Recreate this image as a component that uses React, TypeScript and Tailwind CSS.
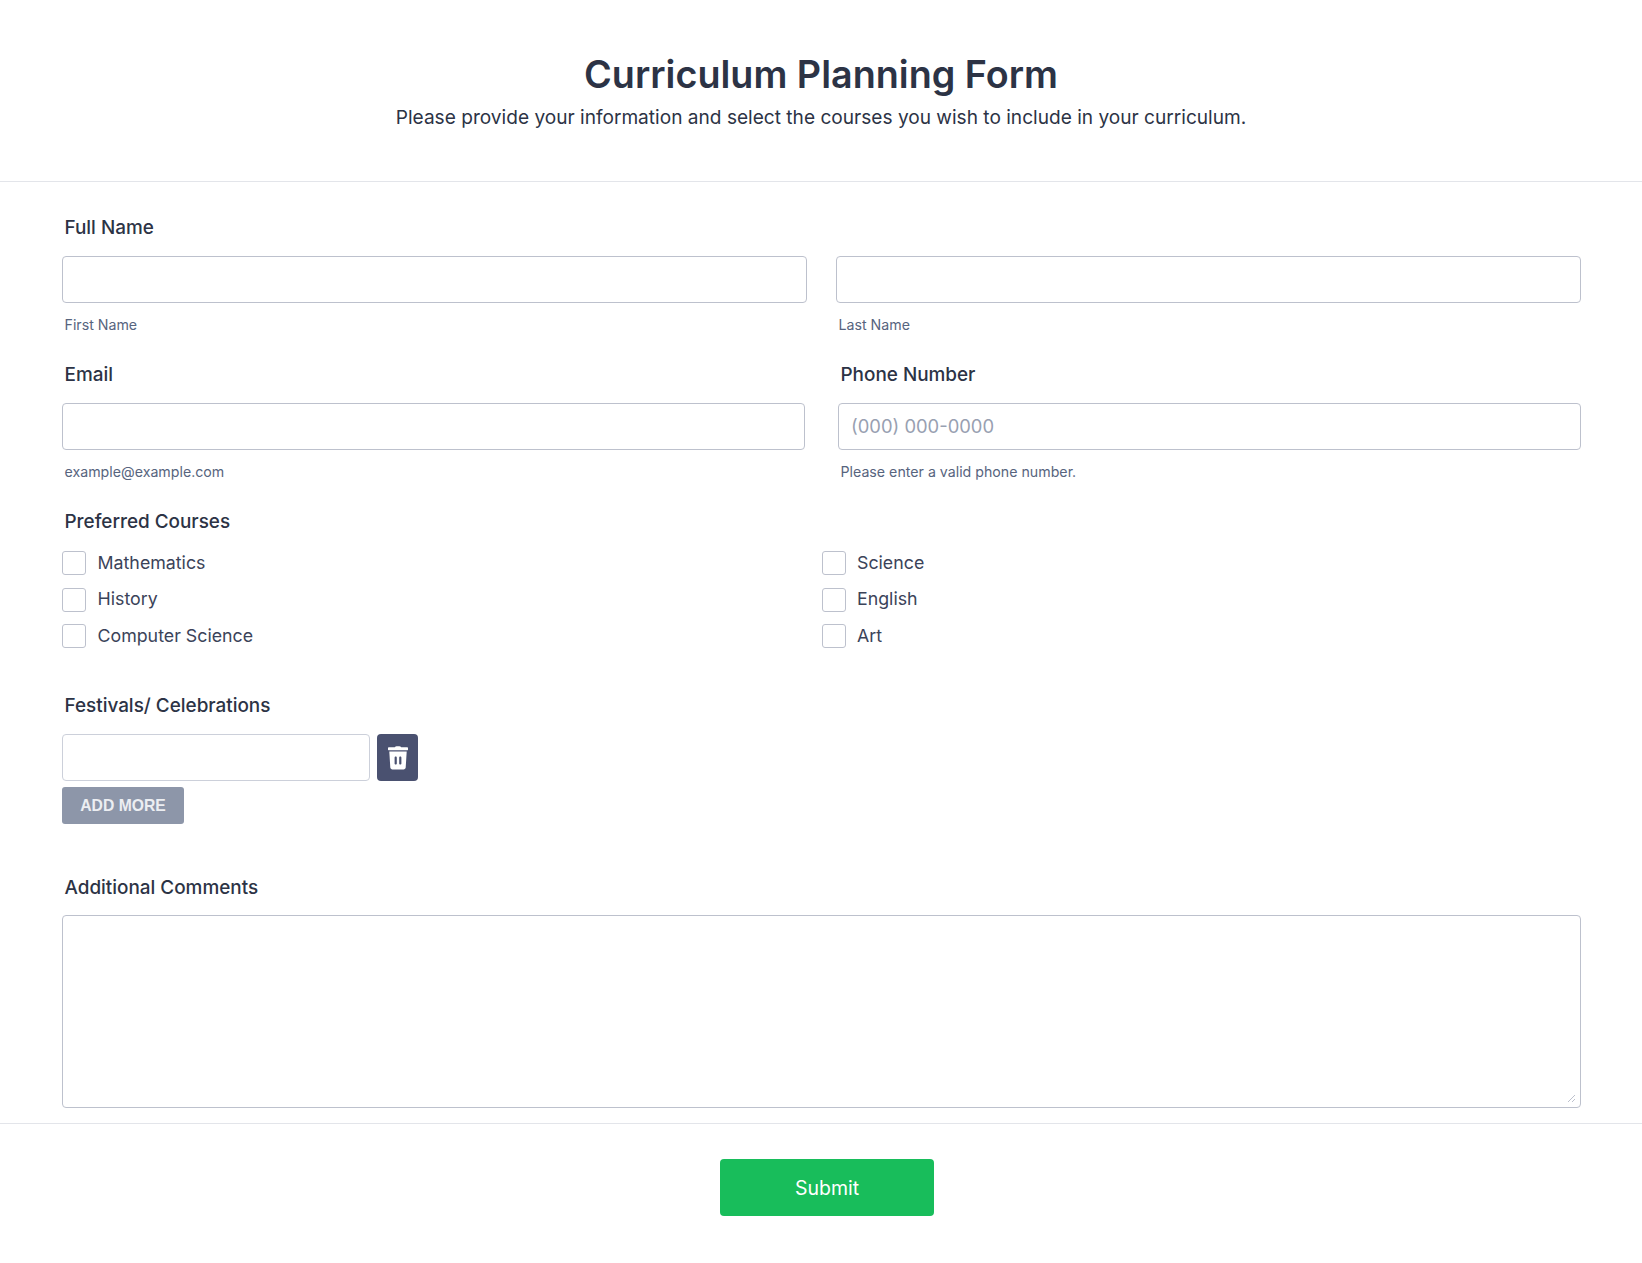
const font = { fontFamily: 'Inter, "Noto Sans", sans-serif' }

const inputClass =
  'block h-[47px] rounded-[4px] border border-[#bdc1cd] bg-white px-[12px] pb-[2px] text-[18.4px] text-[#2c3345] outline-none placeholder:text-[#98a0b1]'

// ── Sub-components ────────────────────────────────────────────────────────────

function Label({ children }: { children: string }) {
  return <p className="pl-[2.5px] text-[18.9px] font-[450] leading-[24px] text-[#2c3345]">{children}</p>
}

function Sub({ children }: { children: string }) {
  return <p className="mt-[13px] pl-[2.5px] text-[14.2px] leading-[18px] text-[#57647e]">{children}</p>
}

function Check({ label }: { label: string }) {
  return (
    <label className="flex h-[24px] items-center gap-[11.5px] text-[17.8px] text-[#3b4359]">
      <input type="checkbox" className="h-[24px] w-[24px] appearance-none rounded-[3px] border border-[#bdc1cd] bg-white" />
      <span>{label}</span>
    </label>
  )
}

function TrashIcon() {
  return (
    <svg width="20" height="24" viewBox="0 0 20 24" fill="white">
      <path d="M6.800 1.300 7.200.8C7.500.4 8 .2 8.500.2h3c.5 0 1 .2 1.300.6l.4.5H19c.6 0 1 .4 1 1v1.400c0 .3-.2.5-.5.5H.5C.2 4.200 0 4 0 3.700V2.300c0-.6.4-1 1-1h5.800Z" />
      <path
        fillRule="evenodd"
        d="M1.300 5.600h17.400l-1 16c-.1 1.100-1 1.900-2.100 1.900H4.400c-1.100 0-2-.8-2.100-1.900l-1-16ZM7.700 10.600c-.6 0-1.100.5-1.100 1.100v5.800c0 .6.5 1.100 1.100 1.100s1.100-.5 1.100-1.100v-5.800c0-.6-.5-1.100-1.100-1.100Zm4.600 0c-.6 0-1.100.5-1.100 1.100v5.800c0 .6.5 1.100 1.100 1.100s1.100-.5 1.100-1.100v-5.800c0-.6-.5-1.100-1.100-1.100Z"
      />
    </svg>
  )
}

// ── Page ──────────────────────────────────────────────────────────────────────

export default function App() {
  return (
    <div style={font} className="min-h-[1263px] bg-white">
      <header className="h-[182px] border-b border-[#e3e5ea] pt-[48px] text-center">
        <h1 className="text-[37.7px] font-semibold leading-[52px] text-[#2c3345]">Curriculum Planning Form</h1>
        <p className="mt-[3px] text-[19.1px] leading-[28px] text-[#2c3345]">
          Please provide your information and select the courses you wish to include in your curriculum.
        </p>
      </header>

      <main className="h-[942px] border-b border-[#e3e5ea] pl-[62px] pr-[61px] pt-[34px]">
        <Label>Full Name</Label>
        <div className="mt-[16px] flex justify-between">
          <div className="w-[745px]">
            <input className={`w-full ${inputClass}`} />
            <Sub>First Name</Sub>
          </div>
          <div className="w-[745px]">
            <input className={`w-full ${inputClass}`} />
            <Sub>Last Name</Sub>
          </div>
        </div>

        <div className="mt-[29px] flex justify-between">
          <div className="w-[743px]">
            <Label>Email</Label>
            <input className={`mt-[16px] w-full ${inputClass}`} />
            <Sub>example@example.com</Sub>
          </div>
          <div className="w-[743px]">
            <Label>Phone Number</Label>
            <input className={`mt-[16px] w-full ${inputClass}`} placeholder="(000) 000-0000" />
            <Sub>Please enter a valid phone number.</Sub>
          </div>
        </div>

        <div className="mt-[29px]">
          <Label>Preferred Courses</Label>
          <div className="mt-[17px] grid grid-cols-[759.5px_1fr] gap-y-[12.5px]">
            <Check label="Mathematics" />
            <Check label="Science" />
            <Check label="History" />
            <Check label="English" />
            <Check label="Computer Science" />
            <Check label="Art" />
          </div>
        </div>

        <div className="mt-[46px]">
          <Label>Festivals/ Celebrations</Label>
          <div className="mt-[16px] flex gap-[7px]">
            <input className={`w-[308px] !border-[#ccd0da] ${inputClass}`} />
            <button className="flex h-[47px] w-[41px] items-center justify-center rounded-[4px] bg-[#4a5170]">
              <TrashIcon />
            </button>
          </div>
          <button
            className="mt-[6px] block h-[37px] w-[122px] rounded-[3px] bg-[#8d96a9] text-[15.7px] font-semibold text-[#eceef2]"
            style={{ fontFamily: '"Liberation Sans", sans-serif' }}
          >
            ADD MORE
          </button>
        </div>

        <div className="mt-[52px]">
          <Label>Additional Comments</Label>
          <div className="relative mt-[15px] w-[1519px]">
            <textarea className="block h-[193px] w-full resize-none rounded-[4px] border border-[#bdc1cd] bg-white p-[13px] outline-none" />
            {/* resize grip */}
            <svg width="9" height="9" viewBox="0 0 9 9" className="absolute bottom-[5px] right-[5px]" stroke="#bdc1cd" strokeWidth="1">
              <path d="M1 8 8 1M5 8 8 5" />
            </svg>
          </div>
        </div>
      </main>

      <footer className="pl-[720px] pt-[35px]">
        <button className="h-[57px] w-[214px] rounded-[4px] bg-[#18bd5b] pt-[2px] text-[19.5px] text-white">Submit</button>
      </footer>
    </div>
  )
}
